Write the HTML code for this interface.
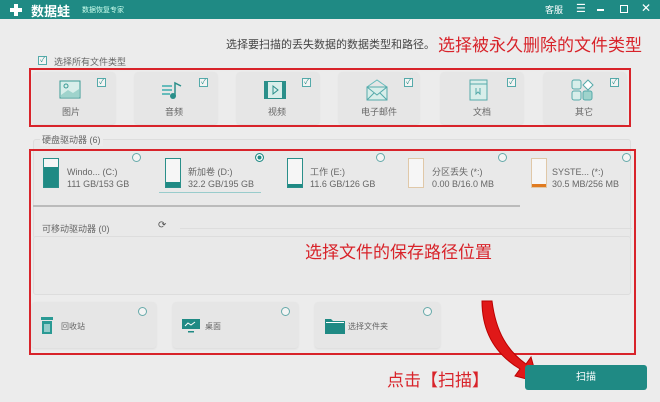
<!DOCTYPE html>
<html><head><meta charset="utf-8"><style>
*{margin:0;padding:0;box-sizing:border-box}
body{width:660px;height:402px;overflow:hidden;background:#ececec;font-family:"Liberation Sans","Noto Sans CJK SC",sans-serif;position:relative;color:#555}
.a{position:absolute}
.t{font-size:9px;color:#666;white-space:nowrap}
.card{position:absolute;background:#e6e6e6;border-radius:3px;box-shadow:0 1px 2px rgba(0,0,0,.08)}
.cb{position:absolute;width:9px;height:9px;border:1px solid #5aa;background:#f4f4f4;font-size:7px;line-height:7px;text-align:center;color:#1f8a84}
.rd{position:absolute;width:9px;height:9px;border:1px solid #6aa;border-radius:50%;background:#f4f4f4}
.red{position:absolute;border:2px solid #d8232a}
.rt{position:absolute;color:#d8232a;font-size:17px;white-space:nowrap}
.drv{position:absolute;width:16px;height:30px;border:1.5px solid #2a8f8a;background:#f6f6f6}
.drv i{position:absolute;left:0;right:0;bottom:0;background:#1f8a84}
</style></head><body>
<div class="a" style="left:0;top:0;width:660px;height:19px;background:#1f8a84"></div>
<div class="a" style="left:10px;top:4px;width:12px;height:12px"><div class="a" style="left:4px;top:0;width:4px;height:12px;background:#fff"></div><div class="a" style="left:0;top:4px;width:12px;height:4px;background:#fff"></div></div>
<div class="a" style="left:31px;top:1px;color:#fff;font-size:13px;font-weight:bold">数据蛙</div>
<div class="a" style="left:82px;top:5px;color:#cfe;font-size:7px">数据恢复专家</div>
<div class="a" style="left:545px;top:3px;color:#fff;font-size:9px">客服</div>
<div class="a" style="left:576px;top:2px;color:#fff;font-size:11px">☰</div>
<div class="a" style="left:597px;top:9px;width:7px;height:1.5px;background:#fff"></div>
<div class="a" style="left:620px;top:5px;width:8px;height:8px;border:1.5px solid #fff"></div>
<div class="a" style="left:641px;top:1px;color:#fff;font-size:12px">✕</div>

<div class="a t" style="left:226px;top:36px;font-size:11px;color:#444">选择要扫描的丢失数据的数据类型和路径。</div>
<div class="rt" style="left:438px;top:31px">选择被永久删除的文件类型</div>
<div class="cb" style="left:38px;top:56px">✓</div>
<div class="a t" style="left:54px;top:55px">选择所有文件类型</div>

<div class="card" style="left:33px;top:72px;width:82px;height:52px"></div>
<div class="card" style="left:135px;top:72px;width:82px;height:52px"></div>
<div class="card" style="left:237px;top:72px;width:82px;height:52px"></div>
<div class="card" style="left:339px;top:72px;width:80px;height:52px"></div>
<div class="card" style="left:441px;top:72px;width:82px;height:52px"></div>
<div class="card" style="left:544px;top:72px;width:82px;height:52px"></div>
<div class="cb" style="left:97px;top:78px">✓</div><div class="cb" style="left:199px;top:78px">✓</div><div class="cb" style="left:302px;top:78px">✓</div><div class="cb" style="left:404px;top:78px">✓</div><div class="cb" style="left:507px;top:78px">✓</div><div class="cb" style="left:610px;top:78px">✓</div>
<svg class="a" style="left:59px;top:80px" width="22" height="20"><rect x="1" y="1" width="20" height="17" fill="#d8eeea" stroke="#3a9a94"/><path d="M2 15 L9 10 L14 13 L20 9 L20 17 L2 17Z" fill="#9fd3cc"/><circle cx="7" cy="6" r="2" fill="none" stroke="#3a9a94"/></svg>
<svg class="a" style="left:160px;top:80px" width="24" height="20"><path d="M2 6h10M2 10h10M2 14h8" stroke="#6bb" stroke-width="2"/><path d="M15 16V3l6 3" stroke="#2a8f8a" stroke-width="1.5" fill="none"/><circle cx="13" cy="16" r="3" fill="#2a8f8a"/></svg>
<svg class="a" style="left:263px;top:80px" width="24" height="20"><rect x="1" y="1" width="22" height="18" fill="#2a8f8a"/><rect x="5" y="2" width="14" height="16" fill="#d8eeea"/><path d="M10 6l5 4-5 4z" fill="none" stroke="#2a8f8a"/></svg>
<svg class="a" style="left:365px;top:79px" width="24" height="22"><path d="M2 8L12 1 22 8" fill="none" stroke="#6bb"/><rect x="2" y="8" width="20" height="13" fill="#d8eeea" stroke="#5aa"/><path d="M2 8l10 8 10-8M2 21l7-7M22 21l-7-7" stroke="#5aa" fill="none"/></svg>
<svg class="a" style="left:469px;top:79px" width="20" height="22"><rect x="1" y="1" width="17" height="20" fill="#d8eeea" stroke="#5aa"/><path d="M1 5h17" stroke="#5aa"/><path d="M7 9v6l2-2 2 2V9" stroke="#5aa" fill="none"/></svg>
<svg class="a" style="left:571px;top:79px" width="24" height="22"><rect x="1" y="1" width="9" height="9" rx="2" fill="#d8eeea" stroke="#5aa"/><path d="M17 1l5 5-5 5-5-5z" fill="#fff" stroke="#5aa"/><rect x="1" y="12" width="9" height="9" rx="2" fill="#d8eeea" stroke="#5aa"/><rect x="12" y="12" width="9" height="9" rx="2" fill="#9fd3cc" stroke="#5aa"/></svg>
<div class="a t" style="left:62px;top:105px">图片</div>
<div class="a t" style="left:165px;top:105px">音频</div>
<div class="a t" style="left:268px;top:105px">视频</div>
<div class="a t" style="left:361px;top:105px">电子邮件</div>
<div class="a t" style="left:473px;top:105px">文档</div>
<div class="a t" style="left:575px;top:105px">其它</div>
<div class="red" style="left:29px;top:68px;width:602px;height:59px"></div>

<div class="a" style="left:33px;top:139px;width:598px;height:100px;background:#e9e9e9;border:1px solid #ddd;border-radius:3px"></div>
<div class="a t" style="left:40px;top:133px;background:#ececec;padding:0 2px">硬盘驱动器 (6)</div>
<div class="drv" style="left:43px;top:158px"><i style="height:20px"></i></div>
<div class="drv" style="left:165px;top:158px"><i style="height:5px"></i></div>
<div class="drv" style="left:287px;top:158px"><i style="height:3px"></i></div>
<div class="drv" style="left:408px;top:158px;border-color:#e0c8a8"></div>
<div class="drv" style="left:531px;top:158px;border-color:#e0c8a8"><i style="height:3px;background:#e07b20"></i></div>
<div class="a t" style="left:67px;top:166px;line-height:12px">Windo... (C:)<br>111 GB/153 GB</div>
<div class="a t" style="left:188px;top:166px;line-height:12px">新加卷 (D:)<br>32.2 GB/195 GB</div>
<div class="a t" style="left:310px;top:166px;line-height:12px">工作 (E:)<br>11.6 GB/126 GB</div>
<div class="a t" style="left:432px;top:166px;line-height:12px">分区丢失 (*:)<br>0.00 B/16.0 MB</div>
<div class="a t" style="left:552px;top:166px;line-height:12px">SYSTE... (*:)<br>30.5 MB/256 MB</div>
<div class="rd" style="left:132px;top:153px"></div>
<div class="rd" style="left:255px;top:153px;background:#1f8a84;border-color:#1f8a84;box-shadow:inset 0 0 0 1.5px #fff"></div>
<div class="rd" style="left:376px;top:153px"></div>
<div class="rd" style="left:498px;top:153px"></div>
<div class="rd" style="left:622px;top:153px"></div>
<div class="a" style="left:159px;top:192px;width:102px;height:1px;background:#9cc"></div>
<div class="a" style="left:33px;top:205px;width:487px;height:2px;background:#bbb"></div>
<div class="a t" style="left:42px;top:222px">可移动驱动器 (0)</div>
<div class="a" style="left:158px;top:220px;font-size:10px;color:#555">⟳</div>
<div class="a" style="left:180px;top:228px;width:452px;height:1px;background:#ddd"></div>
<div class="a" style="left:33px;top:236px;width:598px;height:59px;background:#e9e9e9;border:1px solid #ddd;border-radius:3px"></div>
<div class="rt" style="left:305px;top:238px">选择文件的保存路径位置</div>

<div class="card" style="left:32px;top:302px;width:124px;height:46px"></div>
<div class="card" style="left:173px;top:302px;width:125px;height:46px"></div>
<div class="card" style="left:315px;top:302px;width:125px;height:46px"></div>
<div class="rd" style="left:138px;top:307px"></div><div class="rd" style="left:281px;top:307px"></div><div class="rd" style="left:423px;top:307px"></div>
<svg class="a" style="left:40px;top:317px" width="14" height="18"><rect x="1" y="0" width="12" height="3" fill="#2a9a94"/><rect x="2" y="4" width="10" height="13" fill="#2a9a94"/><path d="M5 7v8M7 7v8M9 7v8" stroke="#fff"/></svg>
<svg class="a" style="left:182px;top:319px" width="18" height="14"><rect x="0" y="0" width="18" height="10" fill="#1f8a84"/><path d="M3 7l3-3 3 2 4-3" stroke="#fff" fill="none"/><rect x="6" y="12" width="6" height="1.5" fill="#1f8a84"/></svg>
<svg class="a" style="left:325px;top:318px" width="20" height="16"><path d="M0 1h6l2 2h12v13H0z" fill="#1f8a84"/><rect x="1" y="4" width="18" height="1" fill="#fff"/></svg>
<div class="a t" style="left:61px;top:321px;font-size:8px">回收站</div>
<div class="a t" style="left:205px;top:321px;font-size:8px">桌面</div>
<div class="a t" style="left:348px;top:321px;font-size:8px">选择文件夹</div>
<div class="red" style="left:29px;top:149px;width:607px;height:206px"></div>

<svg class="a" style="left:470px;top:295px" width="80" height="100"><path d="M12 6 C12 42 30 62 50 74 L45 81 L68 87 L61 62 L56 69 C38 56 26 38 22 6 Z" fill="#e01818" stroke="#b00" stroke-width="1"/></svg>
<div class="rt" style="left:387px;top:366px">点击【扫描】</div>
<div class="a" style="left:525px;top:365px;width:122px;height:25px;background:#1f8a84;border-radius:3px;color:#fff;font-size:10px;text-align:center;line-height:25px">扫描</div>
</body></html>
